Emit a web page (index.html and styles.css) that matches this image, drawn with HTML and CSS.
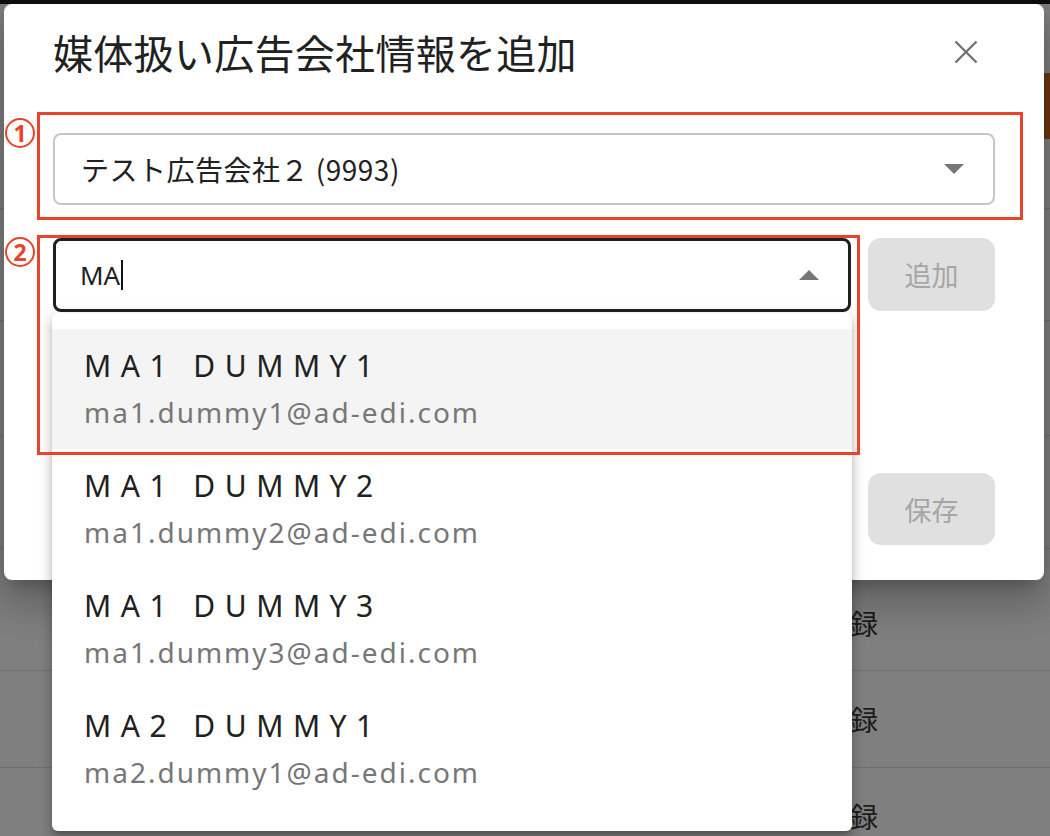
FILE: index.html
```html
<!DOCTYPE html>
<html lang="ja">
<head>
<meta charset="utf-8">
<title>媒体扱い広告会社情報を追加</title>
<link rel="stylesheet" href="styles.css">
</head>
<body>
<div class="page">
  <div class="topbar"></div>
  <div class="toolbar"><span class="page-btn"></span></div>
  <div class="row r1"></div>
  <div class="row r2"></div>
  <div class="row r3"></div>
  <div class="row r4"><span class="cell">登録</span></div>
  <div class="row r5"><span class="cell">登録</span></div>
  <div class="row r6"><span class="cell">登録</span></div>
</div>

<div class="dialog">
  <div class="dialog-head">
    <h1 class="dialog-title">媒体扱い広告会社情報を追加</h1>
    <button class="close-btn" aria-label="閉じる">
      <svg width="24" height="24" viewBox="0 0 24 24"><path d="M1.5 1.5L22.5 22.5M22.5 1.5L1.5 22.5" stroke="#737373" stroke-width="2.4" fill="none"/></svg>
    </button>
  </div>

  <div class="select">
    <span class="select-text">テスト広告会社２ (9993)</span>
    <svg class="arrow" width="20" height="10" viewBox="0 0 20 10"><path d="M0 0H20L10 10Z" fill="#767676"/></svg>
  </div>

  <div class="input-row">
    <div class="combo">
      <span class="combo-text">MA<span class="caret"></span></span>
      <svg class="arrow" width="20" height="10" viewBox="0 0 20 10"><path d="M0 10H20L10 0Z" fill="#767676"/></svg>
    </div>
    <button class="btn">追加</button>
  </div>

  <div class="save-row">
    <button class="btn">保存</button>
  </div>
</div>

<ul class="listbox">
  <li class="option active">
    <span class="opt-name">MA1 DUMMY1</span>
    <span class="opt-mail">ma1.dummy1@ad-edi.com</span>
  </li>
  <li class="option">
    <span class="opt-name">MA1 DUMMY2</span>
    <span class="opt-mail">ma1.dummy2@ad-edi.com</span>
  </li>
  <li class="option">
    <span class="opt-name">MA1 DUMMY3</span>
    <span class="opt-mail">ma1.dummy3@ad-edi.com</span>
  </li>
  <li class="option">
    <span class="opt-name">MA2 DUMMY1</span>
    <span class="opt-mail">ma2.dummy1@ad-edi.com</span>
  </li>
</ul>

<div class="mark box1"></div>
<div class="mark box2"></div>
<span class="num n1">1</span>
<span class="num n2">2</span>
</body>
</html>
```

FILE: styles.css
```css
* { box-sizing: border-box; }
html, body { margin: 0; padding: 0; }
body {
  width: 1050px;
  height: 836px;
  overflow: hidden;
  position: relative;
  background: #7f7f7f;
  font-family: "Noto Sans", "Noto Sans CJK JP", sans-serif;
  color: #212121;
}

/* dimmed page behind */
.page { display: flex; flex-direction: column; }
.topbar { height: 4px; background: #0f0f0f; }
.toolbar { height: 205px; display: flex; justify-content: flex-end; padding-top: 69px; border-bottom: 1px solid #6f6f6f; }
.page-btn { width: 8px; height: 66px; background: #6d3613; border-radius: 4px 0 0 4px; }
.row { display: flex; align-items: center; border-bottom: 1px solid #6f6f6f; }
.r1 { height: 112px; }
.r2 { height: 115px; }
.r3 { height: 113px; }
.r4 { height: 122px; padding-top: 26px; }
.r5 { height: 97px; }
.r6 { height: 97px; }
.cell { margin-left: 822px; font-size: 28px; color: #1c1c1c; font-family: "Noto Sans CJK JP", sans-serif; }

/* dialog */
.dialog {
  position: absolute;
  left: 4px;
  top: 4px;
  width: 1040px;
  height: 576px;
  background: #fff;
  border-radius: 8px;
  padding: 18px 49px 0 49px;
  display: flex;
  flex-direction: column;
  box-shadow: 0 11px 15px -7px rgba(0,0,0,.2), 0 24px 38px 3px rgba(0,0,0,.14), 0 9px 46px 8px rgba(0,0,0,.12);
}
.dialog-head { height: 60px; display: flex; align-items: center; justify-content: space-between; }
.dialog-title {
  margin: 0;
  font-family: "Noto Sans CJK JP", sans-serif;
  font-size: 40px;
  font-weight: 400;
  line-height: 60px;
  letter-spacing: 0.3px;
  color: #212121;
}
.close-btn {
  width: 40px; height: 40px;
  margin-right: 9px;
  border: 0; background: none; padding: 0;
  display: flex; align-items: center; justify-content: center;
}

.select {
  margin-top: 51px;
  height: 72px;
  border: 2px solid #c6c6c6;
  border-radius: 8px;
  display: flex;
  align-items: center;
  justify-content: space-between;
  padding: 0 29px 0 26px;
}
.select-text { font-size: 28px; letter-spacing: 0.5px; font-family: "Noto Sans CJK JP", sans-serif; color: #212121; }

.input-row { margin-top: 33px; display: flex; gap: 17px; }
.combo {
  flex: 1;
  height: 74px;
  border: 3px solid #1f1f1f;
  border-radius: 8px;
  display: flex;
  align-items: center;
  justify-content: space-between;
  padding: 0 29px 0 24px;
}
.combo-text { font-size: 26px; color: #212121; display: flex; align-items: center; }
.caret { display: inline-block; width: 2px; height: 30px; background: #111; margin-left: 1px; }

.btn {
  width: 127px;
  height: 73px;
  border: 0;
  border-radius: 13px;
  background: #e0e0e0;
  color: #a6a6a6;
  font-family: "Noto Sans CJK JP", sans-serif;
  font-size: 27px;
  padding: 0;
}
.save-row { margin-top: 161px; display: flex; justify-content: flex-end; }
.save-row .btn { height: 72px; }

/* autocomplete popup */
.listbox {
  position: absolute;
  left: 52px;
  top: 313px;
  width: 800px;
  height: 518px;
  margin: 0;
  padding: 16px 0 0;
  list-style: none;
  background: #fff;
  border-radius: 6px;
  box-shadow: 0 5px 5px -3px rgba(0,0,0,.2), 0 8px 10px 1px rgba(0,0,0,.14), 0 3px 14px 2px rgba(0,0,0,.12);
}
.option {
  height: 120px;
  padding: 14px 0 0 32px;
  display: flex;
  flex-direction: column;
  gap: 3px;
}
.option.active { background: #f4f4f4; }
.opt-name { font-size: 30px; line-height: 45px; letter-spacing: 9.5px; color: #212121; }
.opt-mail { font-size: 28px; line-height: 42px; letter-spacing: 2px; color: #777; }

/* annotations */
.mark { position: absolute; border: 3px solid #e8432b; }
.box1 { left: 37px; top: 112px; width: 986px; height: 108px; }
.box2 { left: 37px; top: 235px; width: 823px; height: 220px; }
.num {
  position: absolute;
  left: 5px;
  width: 30px;
  height: 30px;
  border: 2px solid #e8432b;
  border-radius: 50%;
  color: #e8432b;
  font-size: 23px;
  font-weight: 700;
  line-height: 26px;
  text-align: center;
}
.n1 { top: 118px; }
.n2 { top: 237px; }
```
